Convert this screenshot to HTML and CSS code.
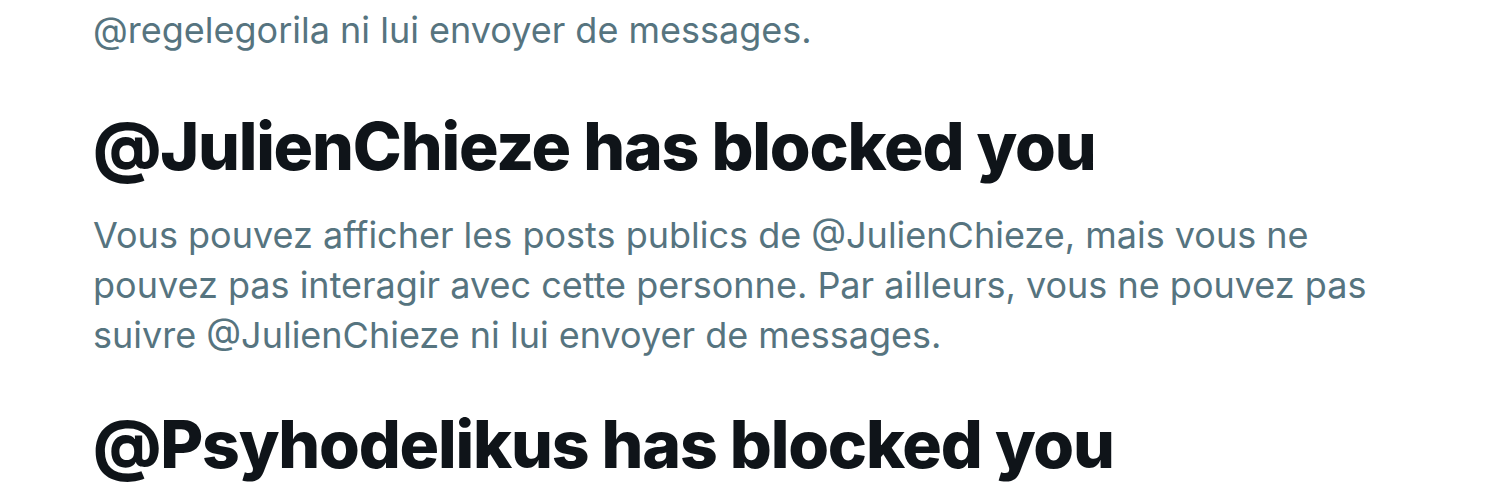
FILE: index.html
```html
<!DOCTYPE html>
<html lang="fr">
<head>
<meta charset="UTF-8">
<meta name="viewport" content="width=device-width, initial-scale=1.0">
<title>Blocked accounts</title>
<link rel="stylesheet" href="styles.css">
</head>
<body>
<div class="blocked-list">
<div class="blocked-item blocked-item-cut">
<p class="blocked-text">@regelegorila ni lui envoyer de messages.</p>
</div>
<div class="blocked-item">
<h2 class="blocked-title">@JulienChieze has blocked you</h2>
<p class="blocked-text">Vous pouvez afficher les posts publics de @JulienChieze, mais vous ne pouvez pas interagir avec cette personne. Par ailleurs, vous ne pouvez pas suivre @JulienChieze ni lui envoyer de messages.</p>
</div>
<div class="blocked-item">
<h2 class="blocked-title">@Psyhodelikus has blocked you</h2>
</div>
</div>
</body>
</html>
```

FILE: styles.css
```css
* {
margin: 0;
padding: 0;
box-sizing: border-box;
}
body {
background-color: #fff;
color: #0f1419;
font-family: 'Inter', 'Roboto', sans-serif;
height: 500px;
overflow: hidden;
}
.blocked-list {
padding: 0 0 0 93px;
}
.blocked-item {
max-width: 1300px;
}
.blocked-item-cut {
margin-top: 5px;
margin-bottom: 46px;
}
.blocked-title {
font-size: 66px;
font-weight: 800;
line-height: 90px;
letter-spacing: -1.2px;
}
.blocked-text {
color: #56747f;
font-size: 36px;
line-height: 50px;
margin-top: 19px;
margin-bottom: 39px;
}
.blocked-item-cut .blocked-text {
margin: 0;
}
```
